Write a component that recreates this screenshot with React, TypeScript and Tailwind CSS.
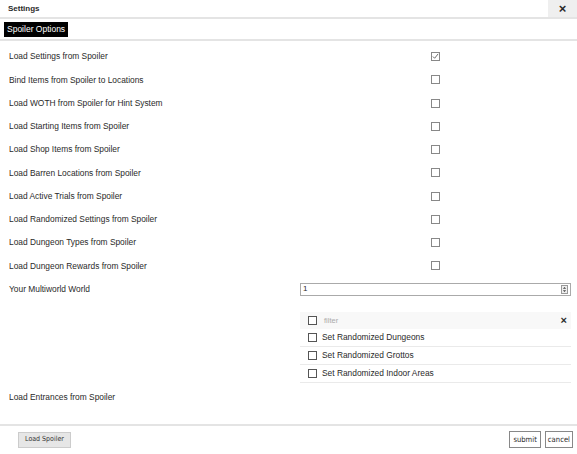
import React from "react";

const OPTIONS: { label: string; checked: boolean }[] = [
  { label: "Load Settings from Spoiler", checked: true },
  { label: "Bind Items from Spoiler to Locations", checked: false },
  { label: "Load WOTH from Spoiler for Hint System", checked: false },
  { label: "Load Starting Items from Spoiler", checked: false },
  { label: "Load Shop Items from Spoiler", checked: false },
  { label: "Load Barren Locations from Spoiler", checked: false },
  { label: "Load Active Trials from Spoiler", checked: false },
  { label: "Load Randomized Settings from Spoiler", checked: false },
  { label: "Load Dungeon Types from Spoiler", checked: false },
  { label: "Load Dungeon Rewards from Spoiler", checked: false },
];

const ENTRANCES = ["Set Randomized Dungeons", "Set Randomized Grottos", "Set Randomized Indoor Areas"];

function Box({ checked, dark }: { checked?: boolean; dark?: boolean }) {
  return (
    <span
      className={`relative inline-block h-[9px] w-[9px] border bg-white ${dark ? "border-[#555]" : "border-[#888]"}`}
    >
      {checked && (
        <svg viewBox="0 0 8 8" className="absolute left-0 top-0 h-[7px] w-[7px]">
          <path d="M1 4 L3 6 L7 1" fill="none" stroke="#666" strokeWidth="1.1" />
        </svg>
      )}
    </span>
  );
}

export default function App() {
  return (
    <div className="flex h-[454px] w-[577px] flex-col bg-white text-[8.4px] text-[#2a2a2a] [font-family:'Liberation_Sans',Arial,sans-serif]">
      {/* title */}
      <div className="flex h-[19px] items-stretch border-b-2 border-[#e4e4e4]">
        <span className="flex flex-1 items-center pl-[8px] text-[8px] font-bold">Settings</span>
        <span className="flex w-[29px] items-center justify-center bg-[#efefef] text-[13px] font-bold leading-none">
          ×
        </span>
      </div>

      {/* tabs */}
      <div className="flex h-[22px] items-center border-b-2 border-[#e4e4e4] pl-[4px]">
        <span className="flex h-[15px] items-center bg-black px-[3px] text-[8.5px] text-white">Spoiler Options</span>
      </div>

      {/* options */}
      <div className="flex flex-1 flex-col pt-[4px]">
        {OPTIONS.map((o) => (
          <div key={o.label} className="flex h-[23.25px] items-center">
            <span className="w-[300px] pl-[9px]">{o.label}</span>
            <span className="flex w-[271px] justify-center">
              <Box checked={o.checked} />
            </span>
          </div>
        ))}

        <div className="flex h-[23.25px] items-center">
          <span className="w-[300px] pl-[9px]">Your Multiworld World</span>
          <div className="flex h-[13px] w-[271px] items-center border border-[#aaa] bg-white pl-[2px]">
            <span className="flex-1 text-[8px]">1</span>
            <span className="mr-[2px] flex h-[9px] w-[7px] flex-col items-center justify-center border border-[#999] bg-[#eee]">
              <svg viewBox="0 0 6 8" className="h-[7px] w-[5px]">
                <path d="M1 3 L3 1 L5 3 Z M1 5 L3 7 L5 5 Z" fill="#444" />
              </svg>
            </span>
          </div>
        </div>

        <div className="ml-[300px] mt-[11px] w-[271px]">
          <div className="flex h-[17px] items-center bg-[#f8f8f8] pl-[8px] pr-[4px]">
            <Box dark />
            <span className="ml-[7px] flex-1 text-[7.5px] text-[#aaa]">filter</span>
            <span className="text-[11px] font-bold leading-none">×</span>
          </div>
          {ENTRANCES.map((e) => (
            <div key={e} className="flex h-[18px] items-center border-b border-[#eaeaea] pl-[8px]">
              <Box dark />
              <span className="ml-[5px]">{e}</span>
            </div>
          ))}
        </div>

        <div className="mt-[6px] flex h-[18px] items-center pl-[9px]">Load Entrances from Spoiler</div>
      </div>

      {/* footer */}
      <div className="flex h-[30px] items-center border-t-2 border-[#e4e4e4] pb-[1px] pl-[18px] pr-[4px]">
        <button className="h-[16px] border border-[#ccc] bg-[#e6e6e6] px-[6px] text-[7px] text-[#333] [font-family:'DejaVu_Sans_Condensed','DejaVu_Sans',sans-serif]">
          Load Spoiler
        </button>
        <span className="flex-1" />
        <button className="h-[17px] border border-[#888] bg-white px-[3px] text-[7.6px] [font-family:'DejaVu_Sans_Condensed','DejaVu_Sans',sans-serif]">
          submit
        </button>
        <button className="ml-[4px] h-[17px] border border-[#888] bg-white px-[2px] text-[7.6px] [font-family:'DejaVu_Sans_Condensed','DejaVu_Sans',sans-serif]">
          cancel
        </button>
      </div>
    </div>
  );
}
